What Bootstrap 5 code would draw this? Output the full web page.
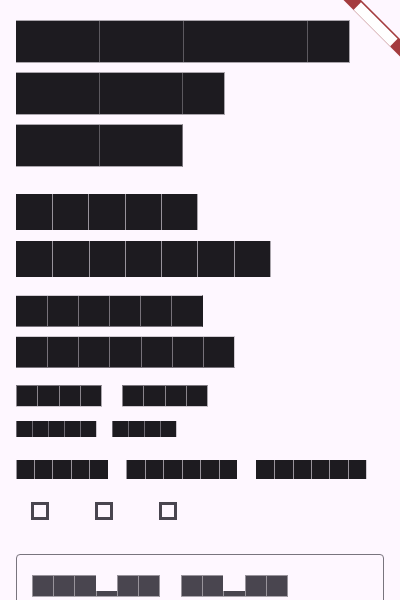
<!DOCTYPE html>
<html lang="en">
<head>
<meta charset="utf-8">
<meta name="viewport" content="width=device-width, initial-scale=1">
<title>Form</title>
<link href="https://cdn.jsdelivr.net/npm/bootstrap@5.3.0/dist/css/bootstrap.min.css" rel="stylesheet">
<style>
html, body { height: 100%; }
body { --page: #fef7ff; --ink: #1d1b20; --seam: #77727a; --edge: #aaa5ac; --end: #aaa5ac; background: var(--page); overflow: hidden; font-family: Roboto, sans-serif; }
/* Block lettering: a run is a word, each i is one or more letters */
.run { display: flex; border-right: 1px solid var(--end); }
.run i { flex: 1 1 0; background: var(--ink); }
.run i.pair { flex-grow: 2; }
.run i.triple { flex-grow: 3; }
.run i + i, .start-edge i:first-child { box-shadow: inset 1px 0 var(--seam); }
.display-run { --seam: #5c595f; height: 43px; }
.display-run, .title-run, .body-run { border-top: 1px solid var(--edge); border-bottom: 1px solid var(--edge); }
.head-run { --seam: #98939b; height: 36px; }
.title-run { height: 32px; border-top-color: #d1cbd3; border-bottom-color: #79747c; }
.body-run { height: 22px; --seam: #89848b; border-top-color: #7c777e; border-bottom-color: #ccc6ce; }
.small-run { --seam: #6c6870; --end: #ccc6ce; height: 16px; }
.label-run { --seam: #98939b; height: 19px; }
.len-8 { width: 334px; } .len-5 { width: 209px; } .len-4 { width: 167px; --end: #77727a; }
.head-5 { width: 182px; } .head-7 { width: 255px; }
.title-6 { width: 187px; --end: var(--ink); } .title-7 { width: 219px; --end: #d1cbd3; }
.body-4 { width: 86px; }
.small-5 { width: 81px; } .small-4 { width: 65px; }
.label-5 { width: 92px; --end: var(--ink); }
.label-6 { width: 112px; --end: var(--page); }
.label-6b { width: 111px; --end: #d1cbd3; }
.hint-6 { width: 128px; } .hint-5 { width: 107px; }
.display-group { padding-top: 20px; gap: 9px; }
.head-group { margin-top: 27px; gap: 11px; }
.title-group { margin-top: 18px; gap: 9px; }
.body-group { margin-top: 17px; gap: 20px; }
.small-group { margin-top: 14px; gap: 15px; }
.label-group { margin-top: 23px; gap: 18px; }
.checks { margin-top: 23px; padding-left: 15px; gap: 46px; }
.checks input { appearance: none; width: 18px; height: 18px; border: 3px solid #49454f; background: transparent; }
.checks input:checked { background: #49454f; }
.field { display: grid; margin-top: 34px; }
.field > * { grid-area: 1 / 1; }
.field input { height: 64px; border: 1px solid #79747e; border-radius: 4px; background: transparent; }
.field label { padding: 21px 16px; gap: 21px; pointer-events: none; }
.hint-run { --ink: #49454f; --seam: #98939b; --end: #98939b; height: 22px; }
.hint-run i { border-top: 1px solid #98939b; border-bottom: 1px solid #aaa5ad; }
.hint-run i.under { height: 6px; align-self: flex-end; border-top: 0; }
.corner { width: 60px; height: 60px; pointer-events: none; }
</style>
</head>
<body>
<main class="container-fluid px-3">
  <h1 class="display-group d-flex flex-column m-0" aria-label="Heading">
    <span class="run display-run len-8"><i class="pair"></i><i class="pair"></i><i class="triple"></i><i></i></span>
    <span class="run display-run len-5"><i class="pair"></i><i class="pair"></i><i></i></span>
    <span class="run display-run len-4"><i class="pair"></i><i class="pair"></i></span>
  </h1>
  <h2 class="head-group d-flex flex-column mb-0" aria-label="Subheading">
    <span class="run head-run head-5"><i></i><i></i><i></i><i></i><i></i></span>
    <span class="run head-run head-7"><i></i><i></i><i></i><i></i><i></i><i></i><i></i></span>
  </h2>
  <h3 class="title-group d-flex flex-column mb-0" aria-label="Title">
    <span class="run title-run title-6"><i></i><i></i><i></i><i></i><i></i><i></i></span>
    <span class="run title-run title-7"><i></i><i></i><i></i><i></i><i></i><i></i><i></i></span>
  </h3>
  <p class="body-group d-flex mb-0">
    <span class="run body-run start-edge body-4"><i></i><i></i><i></i><i></i></span>
    <span class="run body-run start-edge body-4"><i></i><i></i><i></i><i></i></span>
  </p>
  <p class="small-group d-flex mb-0">
    <span class="run small-run start-edge small-5"><i></i><i></i><i></i><i></i><i></i></span>
    <span class="run small-run start-edge small-4"><i></i><i></i><i></i><i></i></span>
  </p>
  <p class="label-group d-flex mb-0">
    <span class="run label-run start-edge label-5"><i></i><i></i><i></i><i></i><i></i></span>
    <span class="run label-run start-edge label-6"><i></i><i></i><i></i><i></i><i></i><i></i></span>
    <span class="run label-run label-6b"><i></i><i></i><i></i><i></i><i></i><i></i></span>
  </p>
  <div class="checks d-flex">
    <input type="checkbox" aria-label="First option">
    <input type="checkbox" aria-label="Second option">
    <input type="checkbox" aria-label="Third option">
  </div>
  <div class="field">
    <input type="text" id="entry" class="w-100 px-3">
    <label for="entry" class="d-flex" aria-label="Text entry">
      <span class="run hint-run start-edge hint-6"><i></i><i></i><i></i><i class="under"></i><i></i><i></i></span>
      <span class="run hint-run start-edge hint-5"><i></i><i></i><i class="under"></i><i></i><i></i></span>
    </label>
  </div>
</main>
<svg class="corner position-absolute top-0 end-0" viewBox="0 0 60 60" aria-hidden="true">
  <path d="M3.5 0H21L60 39V56.5Z" fill="#a43c3f"/>
  <path d="M21 2.2L57.6 38.8L50.2 46.2L13.7 9.7Z" fill="#fff"/>
  <path d="M13.4 9.9L50 46.5" stroke="#ead9de" stroke-width="1"/>
</svg>
<script src="https://cdn.jsdelivr.net/npm/bootstrap@5.3.0/dist/js/bootstrap.bundle.min.js"></script>
</body>
</html>
